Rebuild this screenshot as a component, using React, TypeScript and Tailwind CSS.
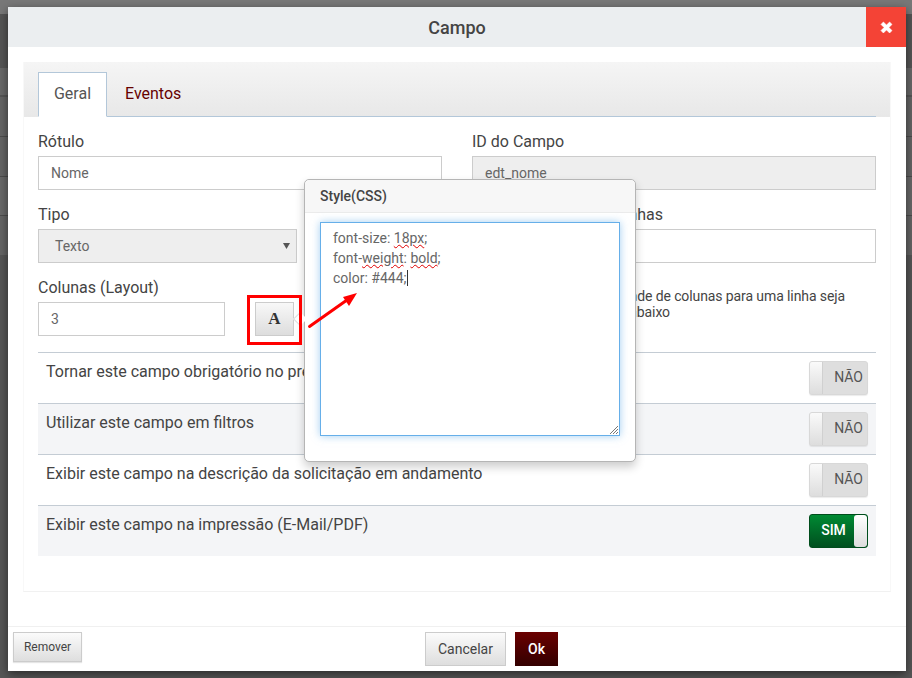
const rows = [
  { label: "Tornar este campo obrigatório no preenchimento", on: false, alt: false },
  { label: "Utilizar este campo em filtros", on: false, alt: true },
  { label: "Exibir este campo na descrição da solicitação em andamento", on: false, alt: false },
  { label: "Exibir este campo na impressão (E-Mail/PDF)", on: true, alt: true },
];

function Toggle({ on }: { on: boolean }) {
  if (on) {
    return (
      <div className="flex h-[34px] w-[59px] overflow-hidden rounded-[3px] border border-[#004d1c] bg-gradient-to-b from-[#008a33] to-[#00501f]">
        <div className="flex-1 pl-[3px] text-center text-[14px] font-medium leading-[30px] text-white">SIM</div>
        <div className="w-[13px] rounded-[3px] bg-gradient-to-b from-white to-[#dddddd]" />
      </div>
    );
  }
  return (
    <div className="flex h-[34px] w-[59px] overflow-hidden rounded-[3px] border border-[#d8d8d8] bg-[#dedede] shadow-[0_1px_1px_rgba(0,0,0,0.08)]">
      <div className="w-[13px] border-r border-[#d0d0d0] bg-gradient-to-b from-[#fafafa] to-[#dddddd]" />
      <div className="flex-1 pr-[4px] text-right text-[14px] leading-[30px] text-[#555]">NÃO</div>
    </div>
  );
}

export default function App() {
  return (
    <div className="relative h-[678px] w-[912px] overflow-hidden bg-[#565656] font-['Roboto',sans-serif] text-[#444]">
      {/* page behind the overlay */}
      <div className="absolute inset-x-0 top-0 flex flex-col">
        <div className="h-[14px] bg-[#787878]" />
        <div className="h-[54px] bg-[#555555]" />
        <div className="h-[29px] border-b-2 border-[#555555] bg-[#686868]" />
        <div className="h-[40px] border-b border-[#4c4c4c] bg-[#646464]" />
        <div className="h-[40px] border-b border-[#4c4c4c] bg-[#646464]" />
        <div className="h-[39px] border-b border-[#4c4c4c] bg-[#686868]" />
        <div className="h-[39px] bg-[#646464]" />
      </div>

      <div className="relative flex h-full flex-col pt-[7px]">
        <div className="ml-[8px] mr-[6px] flex h-[664px] flex-col bg-white shadow-[0_3px_9px_rgba(0,0,0,0.5)]">
          <div className="flex h-[40px] shrink-0 items-center bg-[#ebeef0]">
            <div className="flex-1 pl-[40px] text-center text-[18px] font-medium text-[#444]">Campo</div>
            <div className="flex h-[40px] w-[40px] items-center justify-center bg-[#f44336]">
              <svg width="13" height="13" viewBox="0 0 13 13">
                <path d="M1 3.4 3.4 1 6.5 4.1 9.6 1 12 3.4 8.9 6.5 12 9.6 9.6 12 6.5 8.9 3.4 12 1 9.6 4.1 6.5Z" fill="#fff" stroke="#fff" strokeWidth="0.6" strokeLinejoin="round" />
              </svg>
            </div>
          </div>

          <div className="mx-[15px] mt-[15px] flex h-[530px] flex-col border-b border-[#f1f1f1] border-x border-x-[#f8f8f8]">
            <div className="flex h-[55px] shrink-0 items-end bg-gradient-to-b from-[#f5f5f5] to-[#e8e8e8] px-[14px]">
              <div className="flex flex-1 border-b border-[#b3c7d9]">
                <div className="-mb-px flex h-[45px] w-[69px] items-center justify-center border border-b-white border-[#b3c7d9] bg-white pb-[2px] text-[16px] text-[#555]">Geral</div>
                <div className="flex h-[44px] items-center px-[18px] text-[16px] text-[#660000]">Eventos</div>
              </div>
            </div>

            <div className="flex flex-col px-[14px] pt-[13px]">
              <div className="grid grid-cols-[404px_404px] gap-x-[30px]">
                <div>
                  <div className="text-[16px] leading-[24px]">Rótulo</div>
                  <div className="mt-[2px] h-[34px] border border-[#cccccc] bg-white px-[12px] text-[14px] leading-[32px] text-[#666]">Nome</div>
                </div>
                <div>
                  <div className="text-[16px] leading-[24px]">ID do Campo</div>
                  <div className="mt-[2px] h-[34px] border border-[#cccccc] bg-[#eeeeee] px-[12px] text-[14px] leading-[32px] text-[#666]">edt_nome</div>
                </div>
                <div className="mt-[13px]">
                  <div className="text-[16px] leading-[24px]">Tipo</div>
                  <div className="mt-[2px] flex h-[34px] w-[259px] items-center justify-between border border-[#cccccc] bg-[#eeeeee] pl-[16px] pr-[6px] text-[14px] text-[#666]">
                    Texto
                    <svg width="7" height="6" viewBox="0 0 7 6">
                      <path d="M0 0H7L3.5 6Z" fill="#555" />
                    </svg>
                  </div>
                </div>
                <div className="mt-[13px]">
                  <div className="pr-[213px] text-right text-[16px] leading-[24px]">Linhas</div>
                  <div className="mt-[2px] h-[34px] border border-[#cccccc] bg-white" />
                </div>
                <div className="mt-[13px]">
                  <div className="text-[16px] leading-[24px]">Colunas (Layout)</div>
                  <div className="mt-[2px] flex items-start">
                    <div className="h-[34px] w-[187px] border border-[#cccccc] bg-white px-[12px] text-[14px] leading-[32px] text-[#666]">3</div>
                    <div className="relative ml-[30px] flex h-[34px] w-[39px] items-center justify-center border border-[#cccccc] bg-gradient-to-b from-[#f8f8f8] to-[#dddddd] font-['Liberation_Serif',serif] text-[17px] font-bold text-[#333]">
                      A
                      {/* red highlight around the button */}
                      <div className="absolute left-[-9px] top-[-8px] z-10 h-[50px] w-[55px] border-[3px] border-[#ff0000]" />
                    </div>
                  </div>
                </div>
                <div className="mt-[13px] whitespace-nowrap pt-[12px] text-right text-[14px] leading-[16px] tracking-[-0.1px] text-[#444]">
                  <div className="pr-[31px]">Para que a quantidade de colunas para uma linha seja</div>
                  <div className="pr-[206px]">respeitada, veja abaixo</div>
                </div>
              </div>

              <div className="mt-[16px]">
                {rows.map((row) => (
                  <div key={row.label} className={`flex h-[51px] justify-between border-t border-[#c4ccd4] px-[8px] pt-[8px] ${row.alt ? "bg-[#f4f5f7]" : "bg-white"}`}>
                    <div className="pt-[1px] text-[16px] leading-[20px] text-[#444]">{row.label}</div>
                    <Toggle on={row.on} />
                  </div>
                ))}
              </div>
            </div>
          </div>

          <div className="mt-auto flex h-[45px] shrink-0 border-t border-[#f0f0f0] pt-[5px]">
            <div className="w-[417px] pl-[5px]">
              <button className="h-[30px] w-[69px] border border-[#cccccc] bg-gradient-to-b from-[#fbfbfb] to-[#dedede] text-[12px] text-[#444] shadow-[0_1px_1px_rgba(0,0,0,0.1)]">Remover</button>
            </div>
            <div className="flex gap-[9px]">
              <button className="h-[34px] w-[81px] border border-[#cccccc] bg-gradient-to-b from-[#fbfbfb] to-[#dedede] text-[14px] text-[#444]">Cancelar</button>
              <button className="h-[34px] w-[43px] bg-gradient-to-b from-[#6b0000] to-[#330000] text-[14px] font-medium text-white">Ok</button>
            </div>
          </div>
        </div>
      </div>

      {/* popover opened by the style button */}
      <div className="absolute left-[304px] top-[179px] flex h-[283px] w-[332px] flex-col rounded-[5px] border border-[#b5b5b5] bg-white shadow-[0_5px_10px_rgba(0,0,0,0.2)]">
        <div className="absolute left-[-10px] top-[134px] h-[10px] w-[10px] rotate-45 border-b border-l border-[#dddddd] bg-white" />
        <div className="flex h-[33px] shrink-0 items-center rounded-t-[5px] border-b border-[#ebebeb] bg-[#f7f7f7] pl-[15px] text-[14px] font-medium text-[#444]">Style(CSS)</div>
        <div className="relative mx-[15px] mt-[9px] h-[214px] border border-[#66afe9] bg-white px-[12px] pt-[5px] text-[14px] leading-[20px] text-[#666] shadow-[0_0_8px_rgba(102,175,233,0.6)]">
          <div>font-size: <span className="underline decoration-wavy decoration-[#e00000] decoration-1">18px</span>;</div>
          <div>font-<span className="underline decoration-wavy decoration-[#e00000] decoration-1">weight</span>: <span className="underline decoration-wavy decoration-[#e00000] decoration-1">bold</span>;</div>
          <div className="flex items-center">color: #444;<span className="h-[16px] w-px bg-[#333]" /></div>
          <svg className="absolute bottom-0 right-0" width="10" height="10" viewBox="0 0 10 10">
            <path d="M1 9 9 1M4 9 9 4M7 9 9 7" stroke="#777" strokeWidth="1" fill="none" />
          </svg>
        </div>
      </div>

      {/* red arrow annotation */}
      <svg className="absolute left-[300px] top-[285px]" width="70" height="50" viewBox="0 0 70 50">
        <path d="M9.500 41.500 47 15" stroke="#ff0000" strokeWidth="3" strokeLinecap="round" />
        <path d="M57 8 49 21 43 12Z" fill="#ff0000" />
      </svg>
    </div>
  );
}
